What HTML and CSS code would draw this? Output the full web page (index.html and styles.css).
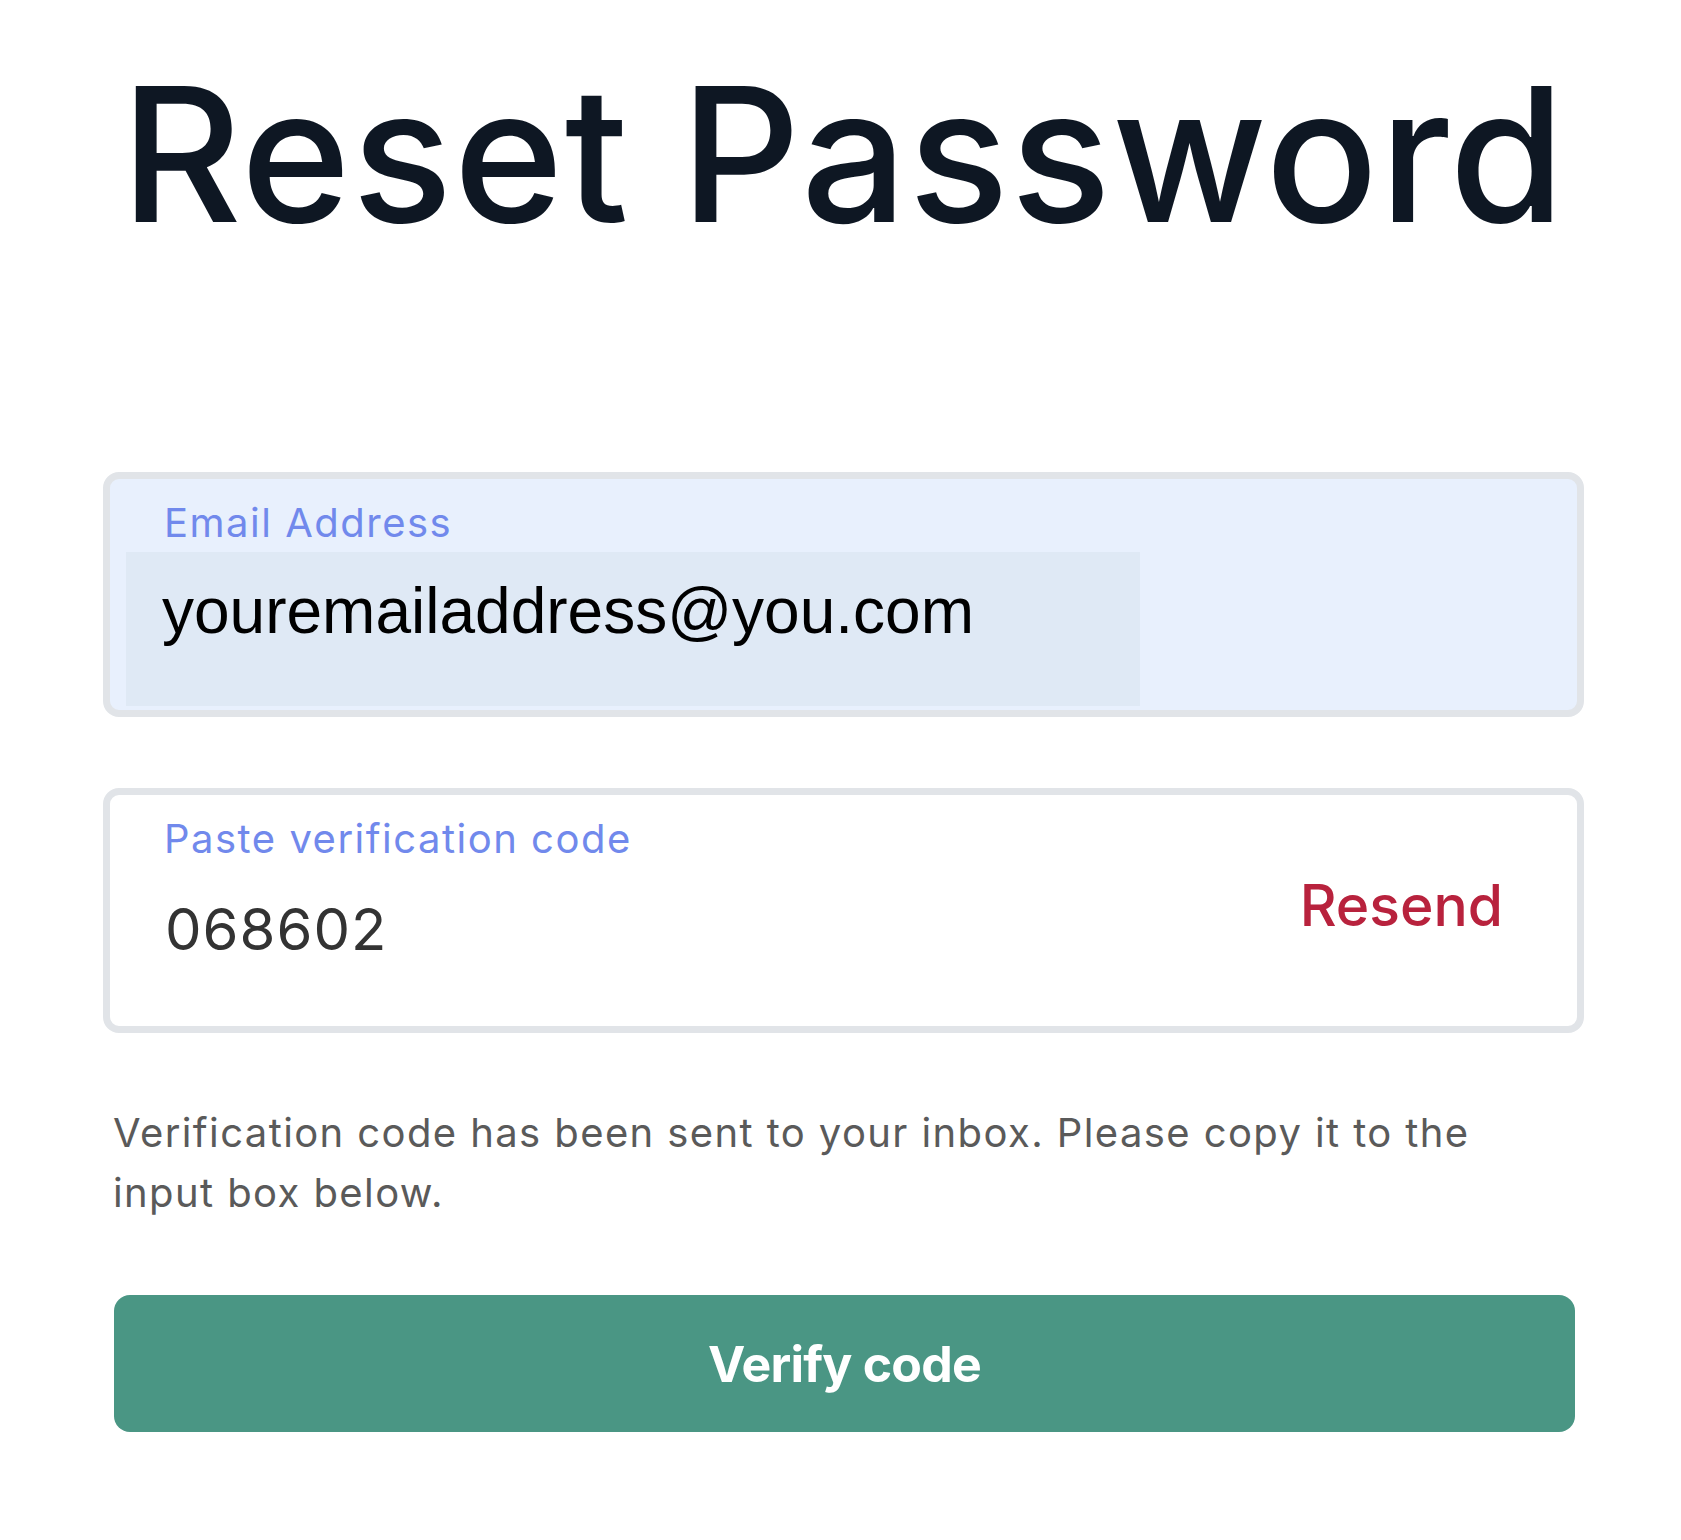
FILE: index.html
```html
<!DOCTYPE html>
<html lang="en">
<head>
    <meta charset="UTF-8">
    <meta name="viewport" content="width=device-width, initial-scale=1.0">
    <title>Reset Password</title>
    <link rel="stylesheet" href="styles.css">
</head>
<body>
    <main class="page">
        <h1>Reset Password</h1>

        <form class="reset-form">
            <div class="field field-filled">
                <div class="field-main">
                    <label for="email">Email Address</label>
                    <input id="email" class="input-email" type="email" value="youremailaddress@you.com">
                </div>
            </div>

            <div class="field">
                <div class="field-main">
                    <label for="code">Paste verification code</label>
                    <input id="code" class="input-code" type="text" value="068602">
                </div>
                <a href="#" class="resend">Resend</a>
            </div>

            <p class="hint">Verification code has been sent to your inbox. Please copy it to the input box below.</p>

            <button type="submit" class="verify-btn">Verify code</button>
        </form>
    </main>
</body>
</html>
```

FILE: styles.css
```css
* {
    box-sizing: border-box;
    margin: 0;
    padding: 0;
}

body {
    font-family: Inter, "Open Sans", sans-serif;
    background-color: #fff;
}

.page {
    width: 1487px;
    margin: 0 auto;
    padding-left: 6px;
}

h1 {
    margin-top: 61px;
    margin-bottom: 224px;
    font-size: 187px;
    font-weight: 500;
    line-height: 1;
    letter-spacing: 1.2px;
    text-align: center;
    color: #0e1723;
}

/* fields */
.field {
    display: flex;
    align-items: center;
    height: 245px;
    padding: 0 74px 0 16px;
    border: 7px solid #e1e4e8;
    border-radius: 16px;
    background-color: #fff;
}

.field + .field {
    margin-top: 71px;
}

.field-filled {
    background-color: #e8f0fd;
}

.field-main {
    flex: 1;
    align-self: flex-start;
}

label {
    display: block;
    margin-top: 20px;
    margin-left: 38px;
    margin-bottom: 5px;
    font-size: 40px;
    line-height: 1.2;
    letter-spacing: 1.5px;
    color: #7189ec;
}

input {
    display: block;
    width: 1014px;
    height: 154px;
    border: none;
    outline: none;
    background: transparent;
    padding: 0 36px;
}

.input-email {
    padding-top: 23px;
    padding-bottom: 59px;
    font-family: "Liberation Sans", Arial, sans-serif;
    font-size: 64px;
    color: #000;
    background-color: #dfe9f5;
}

.input-code {
    padding-top: 26px;
    padding-bottom: 58px;
    padding-left: 39px;
    font-family: Inter, sans-serif;
    font-size: 58px;
    letter-spacing: 1px;
    color: #333;
}

.resend {
    margin-bottom: 8px;
    font-size: 57px;
    font-weight: 500;
    line-height: 1.2;
    color: #b8223d;
    text-decoration: none;
}

.hint {
    max-width: 1420px;
    margin-top: 70px;
    padding-left: 10px;
    font-size: 40px;
    line-height: 60px;
    letter-spacing: 1.4px;
    color: #5a5a5a;
}

.verify-btn {
    display: flex;
    align-items: center;
    justify-content: center;
    width: 1461px;
    height: 137px;
    margin: 72px 0 0 11px;
    border: none;
    border-radius: 16px;
    background-color: #4a9684;
    font-family: Inter, sans-serif;
    font-size: 50px;
    font-weight: 700;
    letter-spacing: -0.8px;
    color: #fff;
    cursor: pointer;
}
```
